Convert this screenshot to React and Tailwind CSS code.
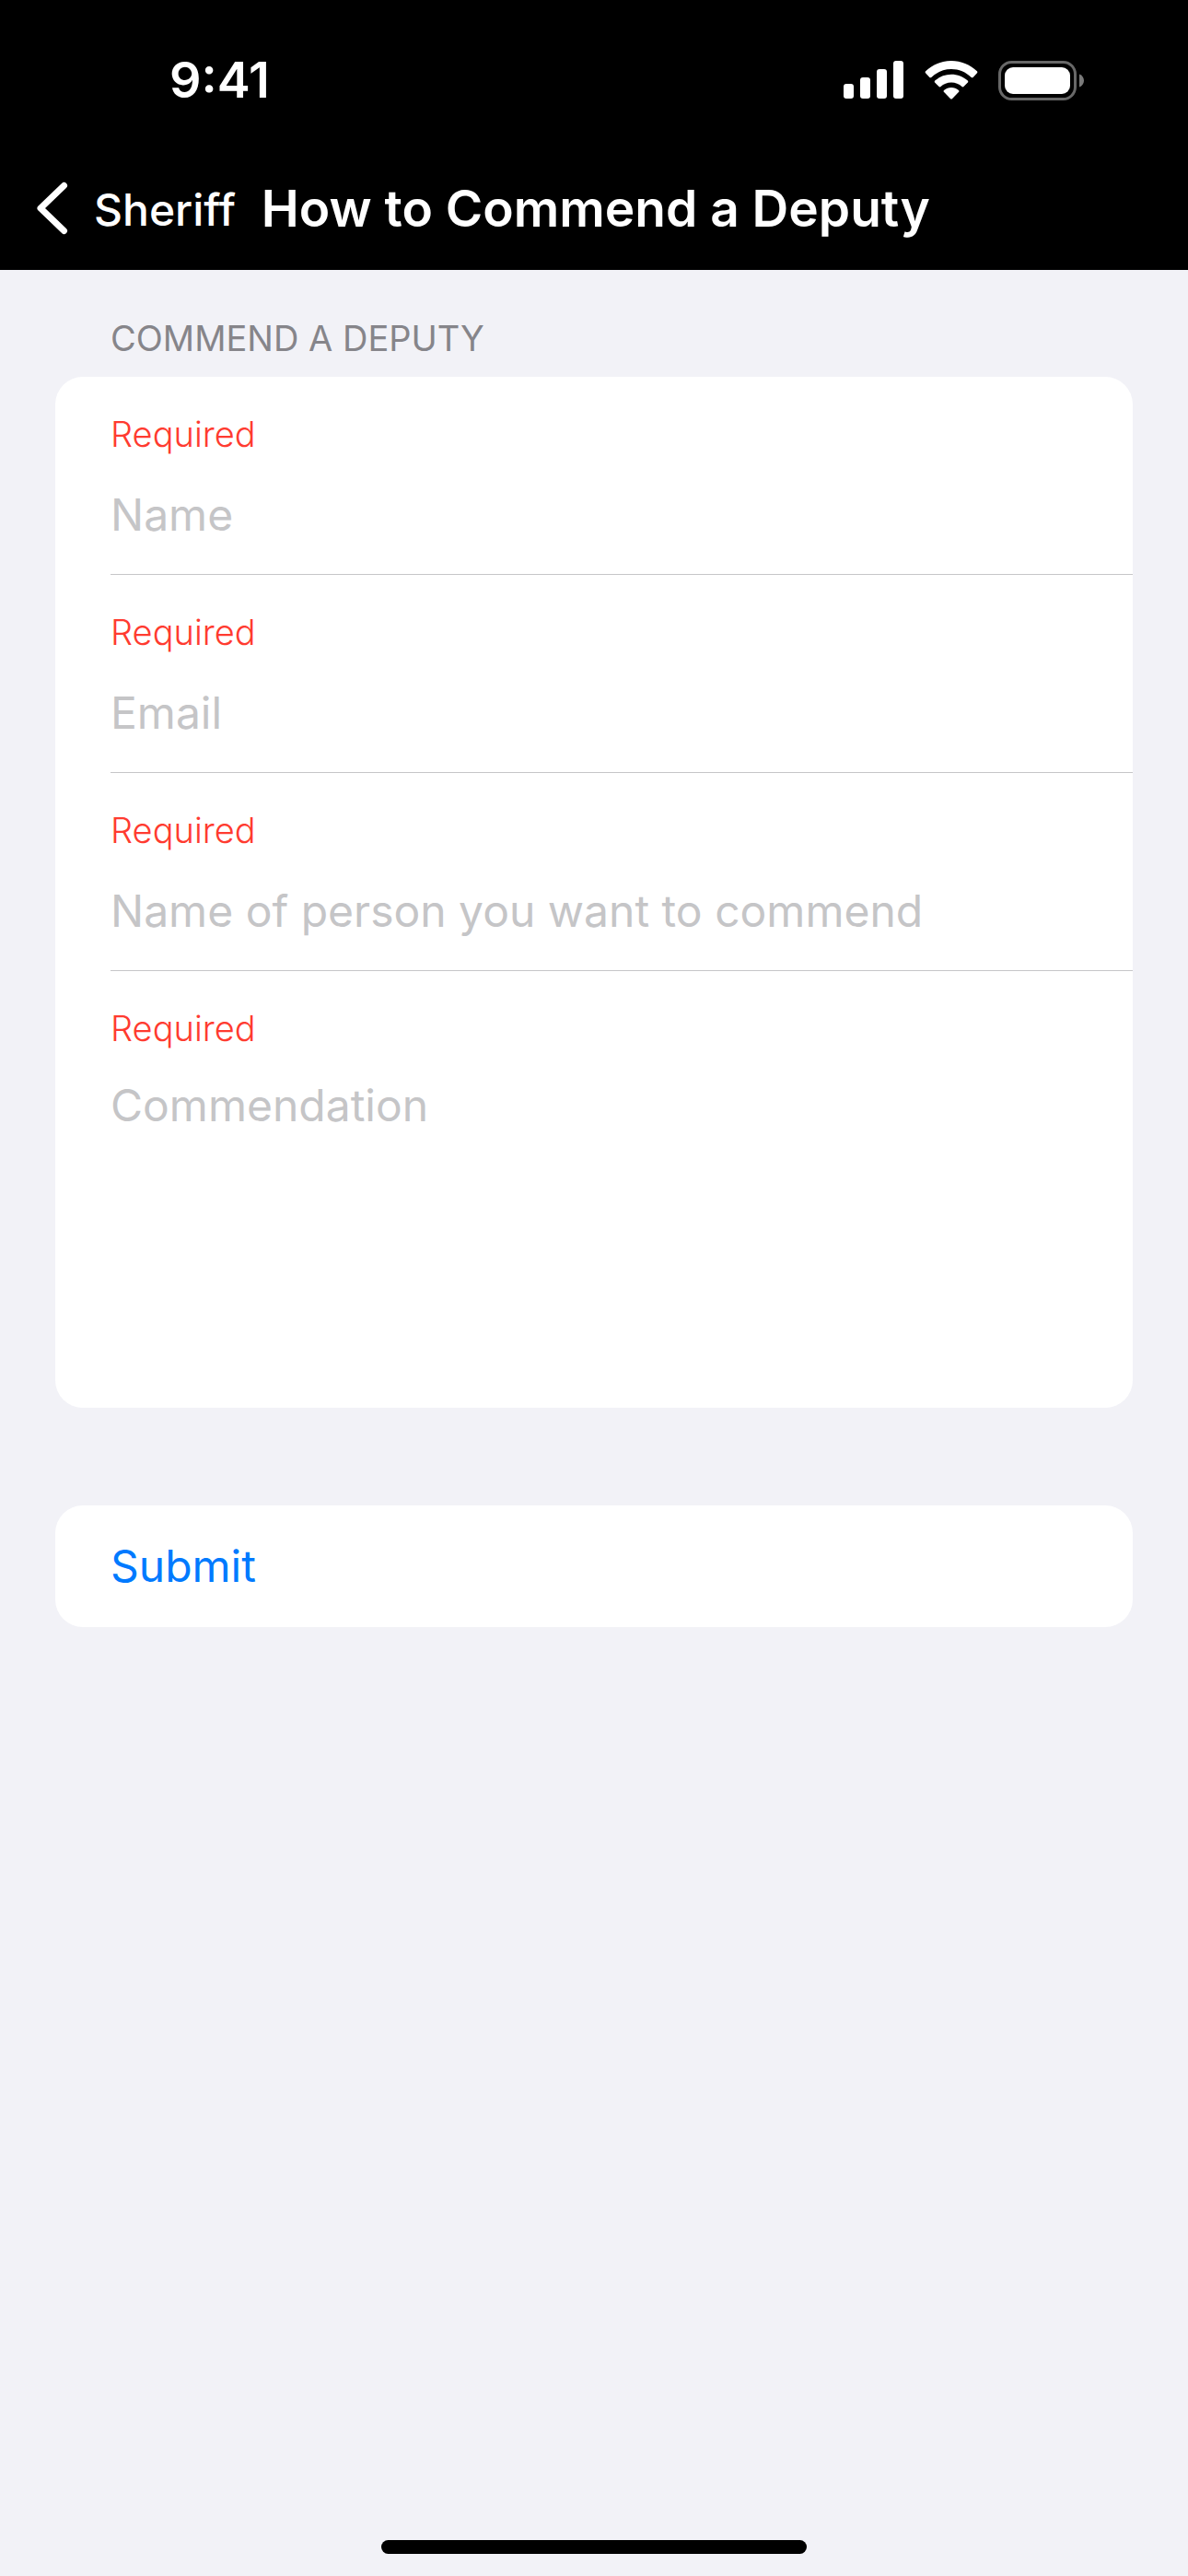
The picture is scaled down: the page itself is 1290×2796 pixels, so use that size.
import { useState } from "react";

const FIELDS = [
  { id: "name", type: "text", placeholder: "Name" },
  { id: "email", type: "email", placeholder: "Email" },
  { id: "deputy", type: "text", placeholder: "Name of person you want to commend" },
];

function SignalIcon() {
  return (
    <svg className="w-[66px] h-[42px]" viewBox="0 0 66 42" fill="currentColor" aria-hidden="true">
      <rect x="0" y="25" width="11" height="16" rx="3" />
      <rect x="18" y="18" width="11" height="23" rx="3" />
      <rect x="36" y="9" width="11" height="32" rx="3" />
      <rect x="54" y="0" width="11" height="41" rx="3" />
    </svg>
  );
}

function WifiIcon() {
  return (
    <svg className="w-[58px] h-[42px]" viewBox="0 0 58 42" fill="currentColor" aria-hidden="true">
      <path d="M29 0C39.5 0 49.3 4 56.9 11.3C57.5 11.9 57.5 12.7 57 13.3L52.6 17.9C52.1 18.4 51.3 18.4 50.7 17.9C44.8 12.3 37.2 9 29 9C20.8 9 13.2 12.3 7.3 17.9C6.7 18.4 5.9 18.4 5.4 17.9L1 13.3C0.5 12.7 0.5 11.9 1.1 11.3C8.7 4 18.5 0 29 0Z" />
      <path d="M29 14.7C35.7 14.7 41.9 17.2 46.8 21.6C47.4 22.2 47.4 23 46.9 23.6L42.4 28.1C41.9 28.6 41.1 28.6 40.5 28.1C37.4 25.3 33.4 23.6 29 23.6C24.6 23.6 20.6 25.3 17.5 28.1C16.9 28.6 16.1 28.6 15.6 28.1L11.1 23.6C10.6 23 10.6 22.2 11.2 21.6C16.1 17.2 22.3 14.7 29 14.7Z" />
      <path d="M29 29C32 29 34.7 30 37 31.9C37.6 32.4 37.6 33.2 37.1 33.8L29.9 41.2C29.4 41.7 28.6 41.7 28.1 41.2L20.9 33.8C20.4 33.2 20.4 32.4 21 31.9C23.3 30 26 29 29 29Z" />
    </svg>
  );
}

function BatteryIcon() {
  return (
    <svg className="w-[94px] h-[43px]" viewBox="0 0 94 43" aria-hidden="true">
      <rect x="1.5" y="1.5" width="82" height="40" rx="13" fill="none" stroke="#686868" strokeWidth="3" />
      <rect x="7" y="7" width="71" height="29" rx="9" fill="#fff" />
      <path d="M88 14.5C91 15.5 93 18.3 93 21.5C93 24.7 91 27.5 88 28.5Z" fill="#7a7a7a" />
    </svg>
  );
}

function StatusBar() {
  return (
    <div className="flex h-[174px] items-center justify-between pr-28 pl-[184px]">
      <span className="text-[54px] leading-none font-semibold">9:41</span>
      <div className="flex items-center gap-[22px]">
        <SignalIcon />
        <WifiIcon />
        <BatteryIcon />
      </div>
    </div>
  );
}

function NavBar() {
  return (
    <nav className="flex h-[119px] items-center pb-4 pl-10">
      <a href="#sheriff" aria-label="Back to Sheriff" className="flex items-center gap-7">
        <svg
          className="h-[58px] w-[34px]"
          viewBox="0 0 34 58"
          fill="none"
          stroke="currentColor"
          strokeWidth="7"
          strokeLinecap="round"
          strokeLinejoin="round"
          aria-hidden="true"
        >
          <path d="M29.5 4.5L4 29L29.5 53.5" />
        </svg>
        <span className="pt-1 text-[48px] leading-[60px] font-medium">Sheriff</span>
      </a>
      <h1 className="pl-7 text-[55px] leading-[60px] font-semibold whitespace-nowrap">
        How to Commend a Deputy
      </h1>
    </nav>
  );
}

function Required({ htmlFor }) {
  return (
    <label htmlFor={htmlFor} className="block text-[38px] leading-[48px] font-light text-[#ff3b30]">
      Required
    </label>
  );
}

function App() {
  const [form, setForm] = useState({ name: "", email: "", deputy: "", commendation: "" });

  const handleChange = (e) => {
    setForm({ ...form, [e.target.name]: e.target.value });
  };

  const handleSubmit = (e) => {
    e.preventDefault();
  };

  return (
    <div className="flex min-h-screen flex-col bg-[#f2f2f7] font-['Inter',sans-serif]">
      <header className="bg-black text-white">
        <StatusBar />
        <NavBar />
      </header>

      <form onSubmit={handleSubmit} noValidate className="flex-1 px-[60px] pt-[50px]">
        <h2 className="px-[60px] pb-[18px] text-[38px] leading-[48px] text-[#86858a] uppercase">
          Commend a Deputy
        </h2>

        <div className="rounded-[30px] bg-white pl-[60px]">
          {FIELDS.map((field) => (
            <div key={field.id} className="border-b border-[#c6c6c8] pt-[38px] pb-8">
              <Required htmlFor={field.id} />
              <input
                id={field.id}
                name={field.id}
                type={field.type}
                placeholder={field.placeholder}
                value={form[field.id]}
                onChange={handleChange}
                className="mt-8 block h-16 w-full text-[48px] leading-[64px] outline-none placeholder:text-[#c5c5c7]"
              />
            </div>
          ))}

          <div className="pt-[38px] pb-8">
            <Required htmlFor="commendation" />
            <textarea
              id="commendation"
              name="commendation"
              placeholder="Commendation"
              value={form.commendation}
              onChange={handleChange}
              className="mt-7 block h-[328px] w-full resize-none text-[48px] leading-[64px] outline-none placeholder:text-[#c5c5c7]"
            />
          </div>
        </div>

        <button
          type="submit"
          className="mt-[106px] block h-[132px] w-full rounded-[30px] bg-white px-[60px] text-left text-[48px] leading-[64px] text-[#007aff]"
        >
          Submit
        </button>
      </form>

      <div className="mx-auto mb-6 h-[15px] w-[462px] rounded-full bg-black" />
    </div>
  );
}

export default App;
